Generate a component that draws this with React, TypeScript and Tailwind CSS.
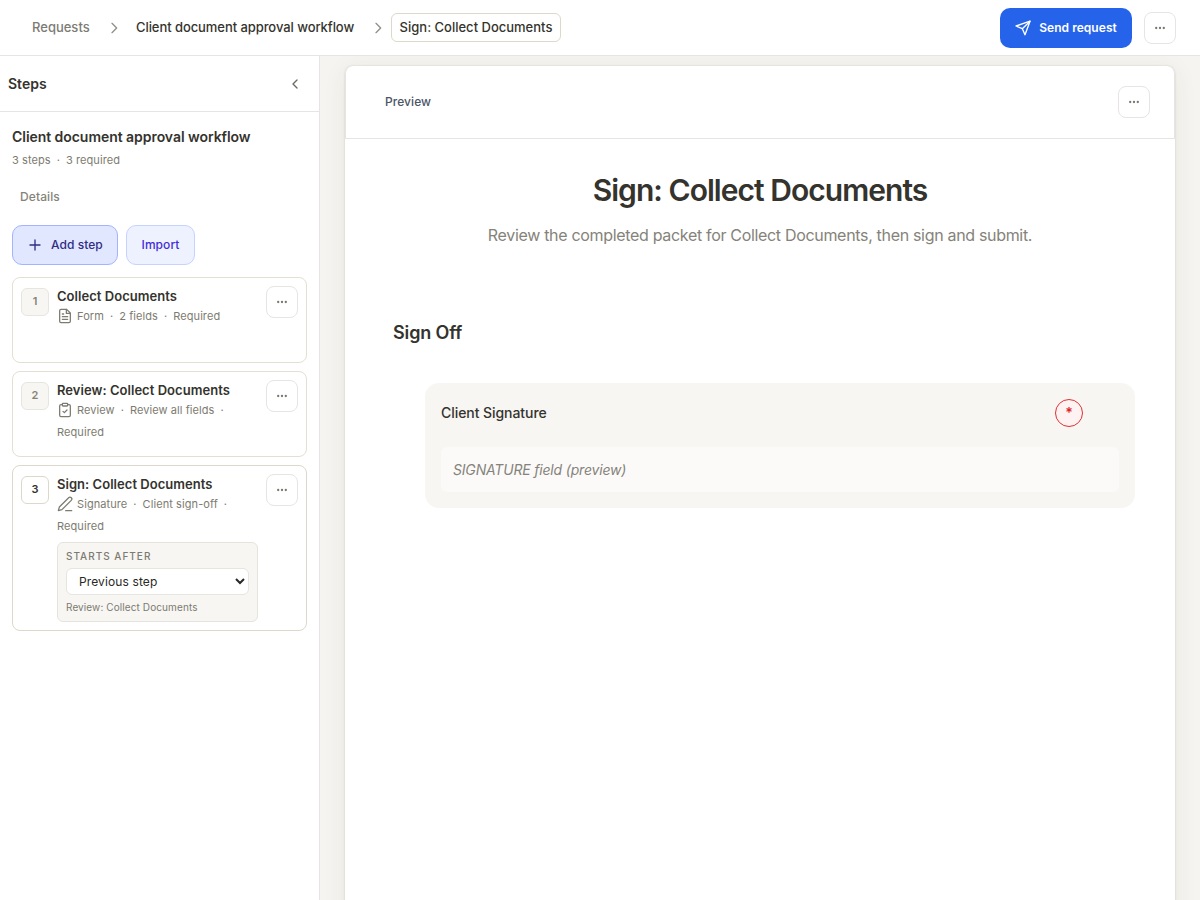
import React from 'react';

type IconProps = { className?: string };

const svgProps = {
  viewBox: '0 0 24 24',
  fill: 'none',
  stroke: 'currentColor',
  strokeLinecap: 'round' as const,
  strokeLinejoin: 'round' as const,
};

const ChevronRight = ({ className }: IconProps) => (
  <svg {...svgProps} strokeWidth={2} className={className}>
    <path d="m9 5 7 7-7 7" />
  </svg>
);

const SendIcon = ({ className }: IconProps) => (
  <svg {...svgProps} strokeWidth={2} className={className}>
    <path d="M22.5 1.8 15 22.2l-4-9.2-9.5-4Z" />
    <path d="M22.5 1.8 11 13" />
  </svg>
);

const FormIcon = ({ className }: IconProps) => (
  <svg {...svgProps} strokeWidth={1.9} className={className}>
    <path d="M14.5 2H6a2 2 0 0 0-2 2v16a2 2 0 0 0 2 2h12a2 2 0 0 0 2-2V7.5Z" />
    <path d="M14 2v6h6" />
    <path d="M8 9h2" />
    <path d="M8 13h8" />
    <path d="M8 17h8" />
  </svg>
);

const ReviewIcon = ({ className }: IconProps) => (
  <svg {...svgProps} strokeWidth={1.9} className={className}>
    <rect x="8" y="2" width="8" height="4" rx="1" />
    <path d="M16 4h2a2 2 0 0 1 2 2v14a2 2 0 0 1-2 2H6a2 2 0 0 1-2-2V6a2 2 0 0 1 2-2h2" />
    <path d="m9 14 2 2 4-4" />
  </svg>
);

const SignatureIcon = ({ className }: IconProps) => (
  <svg {...svgProps} strokeWidth={1.9} className={className}>
    <path d="M13 22h9" />
    <path d="M17.5 2.6a2.7 2.7 0 0 1 3.9 3.9L7.4 20.5 2 22l1.5-5.4Z" />
  </svg>
);

const MoreButton = ({ className = '' }: IconProps) => (
  <button className={`flex h-8 w-8 shrink-0 items-center justify-center rounded-lg border border-[#e7e5e4] bg-white text-[#78776c] ${className}`}>
    <svg viewBox="0 0 12 4" fill="currentColor" className="h-1 w-3">
      <circle cx="2.2" cy="2" r="1.15" />
      <circle cx="6" cy="2" r="1.15" />
      <circle cx="9.8" cy="2" r="1.15" />
    </svg>
  </button>
);

const Dot = () => <span className="mx-1.5">·</span>;

const steps = [
  { title: 'Collect Documents', icon: FormIcon, kind: 'Form', detail: '2 fields', active: false },
  { title: 'Review: Collect Documents', icon: ReviewIcon, kind: 'Review', detail: 'Review all fields', active: false },
  { title: 'Sign: Collect Documents', icon: SignatureIcon, kind: 'Signature', detail: 'Client sign-off', active: true },
];

const Header = () => (
  <header className="flex h-14 shrink-0 items-center border-b border-[#e7e5e4] bg-white pr-6 pl-8 text-[13px] font-medium">
    <span className="w-[58px] whitespace-nowrap text-[#7c7b74]">Requests</span>
    <ChevronRight className="mr-[14px] ml-4 h-4 w-4 text-[#91908a]" />
    <span className="w-[220px] tracking-[-0.07px] whitespace-nowrap">Client document approval workflow</span>
    <ChevronRight className="mr-[5px] ml-[14px] h-4 w-4 text-[#91908a]" />
    <span className="flex h-[29px] w-[170px] items-center justify-center rounded-md border border-[#dcd8cc] whitespace-nowrap">
      Sign: Collect Documents
    </span>
    <button className="mr-3 ml-auto flex h-10 w-[132px] items-center justify-center gap-2 rounded-[10px] bg-[#2563eb] text-xs font-semibold tracking-[0.04px] whitespace-nowrap text-white">
      <SendIcon className="h-4 w-4" />
      Send request
    </button>
    <MoreButton />
  </header>
);

const Sidebar = () => (
  <aside className="flex w-80 shrink-0 flex-col border-r border-[#e7e5e4] bg-white">
    <div className="flex h-14 items-center justify-between border-b border-[#e7e5e4] pr-4 pl-2">
      <h2 className="text-sm font-semibold">Steps</h2>
      <svg {...svgProps} strokeWidth={2} className="h-4 w-4 text-[#6b6a63]">
        <path d="m15 6-6 6 6 6" />
      </svg>
    </div>
    <div className="px-3 pt-[15px]">
      <h3 className="text-sm leading-5 font-semibold tracking-[-0.05px]">Client document approval workflow</h3>
      <p className="mt-[5px] text-[11px] leading-4 tracking-[0.08px] text-[#7d7b70]">3 steps<Dot />3 required</p>
      <button className="mt-[21px] ml-2 block text-xs leading-4 font-medium tracking-[0.1px] text-[#858379]">Details</button>
      <div className="mt-[20px] flex gap-2 text-xs font-medium">
        <button className="flex h-10 w-[106px] items-center rounded-[10px] border border-[#a3b3ff] bg-[#e0e7ff] pl-[14px] tracking-[0.06px] text-[#312c85]">
          <svg {...svgProps} strokeWidth={2} className="mr-2 h-4 w-4">
            <path d="M12 4.5v15M4.5 12h15" />
          </svg>
          Add step
        </button>
        <button className="h-10 w-[69px] rounded-[10px] border border-[#c6d2ff] bg-[#eef2ff] tracking-[0.06px] text-[#432dd7]">Import</button>
      </div>
      <div className="mt-3 flex flex-col gap-2">
        {steps.map((step, idx) => (
          <div
            key={step.title}
            className={`flex rounded-lg border p-2 ${step.active ? 'h-[166px] border-[#dcd8cc]' : 'h-[86px] border-[#e5dfd3]'}`}
          >
            <div
              className={`mt-0.5 mr-2 flex h-7 w-7 shrink-0 items-center justify-center rounded-md border pb-px text-[11px] font-semibold ${
                step.active ? 'border-[#dcd8cc] bg-white' : 'border-[#e7e5e0] bg-[#f7f6f3] text-[#858379]'
              }`}
            >
              {idx + 1}
            </div>
            <div className="w-[201px]">
              <h4 className="mt-px text-[13px] leading-[18px] font-semibold tracking-[0.04px]">{step.title}</h4>
              <div className="flex flex-wrap items-center text-[11px] leading-[22px] tracking-[0.08px] text-[#7d7b70]">
                <step.icon className="mr-1 h-4 w-4" />
                {step.kind}
                <Dot />
                {step.detail}
                <Dot />
                <span>Required</span>
              </div>
              {step.active && (
                <div className="mt-[5px] h-20 rounded-md border border-[#e5e3dc] bg-[#f7f6f3] px-2 pt-[5px] text-[#7d7b70]">
                  <div className="text-[10px] leading-4 font-medium tracking-[1px]">STARTS AFTER</div>
                  <select className="mt-1 block h-[27px] w-[183px] rounded-md border border-[#e7e5e0] bg-white pl-2 text-xs tracking-[0.12px] text-[#292824]">
                    <option>Previous step</option>
                  </select>
                  <div className="mt-[4px] text-[10px] leading-4 tracking-[0.1px]">Review: Collect Documents</div>
                </div>
              )}
            </div>
            <MoreButton className="ml-auto" />
          </div>
        ))}
      </div>
    </div>
  </aside>
);

const Preview = () => (
  <main className="flex-1 overflow-hidden bg-[#f5f4f0] px-[25px] pt-[10px]">
    <div className="h-[900px] rounded-t-lg bg-white shadow-[0_0_2px_rgba(60,50,20,0.2),0_4px_24px_rgba(60,50,20,0.07)]">
      <div className="flex h-[73px] items-center justify-between rounded-t-lg border-x border-b border-[#e7e5e4] pr-6 pb-px pl-[39px]">
        <span className="text-xs font-medium tracking-[0.06px] text-[#4a5565]">Preview</span>
        <MoreButton />
      </div>
      <h1 className="mt-[33px] text-center text-[30px] leading-9 font-semibold tracking-[-0.96px]">Sign: Collect Documents</h1>
      <p className="mt-[15px] text-center text-base leading-6 tracking-[-0.32px] text-[#858379]">
        Review the completed packet for Collect Documents, then sign and submit.
      </p>
      <h2 className="mt-[72px] ml-12 text-lg leading-7 font-semibold tracking-[-0.14px]">Sign Off</h2>
      <div className="mt-[36px] mr-10 ml-20 h-[125px] rounded-[14px] bg-[#f7f6f3] p-4">
        <div className="flex h-7 items-center justify-between pr-9">
          <span className="text-sm font-medium tracking-[-0.06px]">Client Signature</span>
          <span className="flex h-7 w-7 items-center justify-center rounded-full border border-[#e03131] bg-[#fef2f2] text-sm font-semibold text-[#dc2626]">
            *
          </span>
        </div>
        <div className="mt-5 flex h-[45px] items-center rounded-md bg-[#fbfaf9] px-3 text-sm tracking-[-0.18px] text-[#858379] italic">
          SIGNATURE field (preview)
        </div>
      </div>
    </div>
  </main>
);

const App = () => {
  return (
    <div className="flex h-screen flex-col overflow-hidden bg-white font-['Inter',sans-serif] text-[#34332d]">
      <Header />
      <div className="flex min-h-0 flex-1">
        <Sidebar />
        <Preview />
      </div>
    </div>
  );
};

export default App;
